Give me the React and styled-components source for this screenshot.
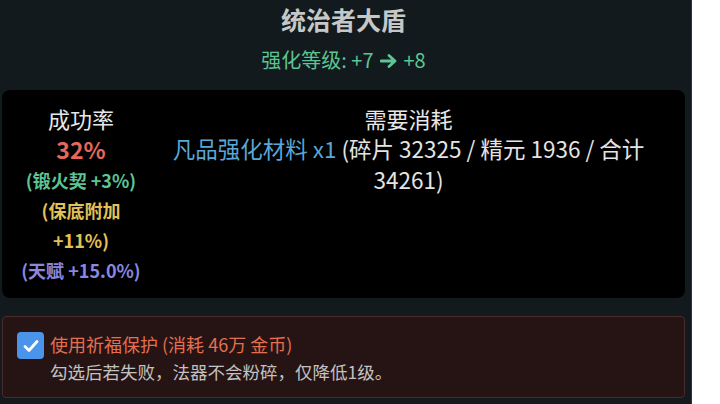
import React from 'react';
import styled, { createGlobalStyle } from 'styled-components';

const Global = createGlobalStyle`
    html, body {
        margin: 0;
        padding: 0;
        background: #fff;
    }
    body {
        font-family: "Noto Sans CJK SC", "Noto Sans", sans-serif;
    }
`;

function Arrow() {
    return (
        <svg width="18" height="16" viewBox="0 0 18 16" style={{ margin: '0 6px', verticalAlign: '-1px' }}>
            <path d="M1 8 H14 M9 2.5 L15 8 L9 13.5" fill="none" stroke="currentColor" strokeWidth="2.8" strokeLinecap="round" strokeLinejoin="round" />
        </svg>
    );
}

function App() {
    return (
        <>
            <Global />
            <Panel>
                <Title>统治者大盾</Title>
                <Level>强化等级: +7<Arrow />+8</Level>

                <CostBox>
                    <RateCol>
                        <Head>成功率</Head>
                        <Rate>32%</Rate>
                        <Bonus color="#5cc593">(锻火契 +3%)</Bonus>
                        <Bonus color="#e3c159">(保底附加 +11%)</Bonus>
                        <Bonus color="#8a87e0">(天赋 +15.0%)</Bonus>
                    </RateCol>
                    <NeedCol>
                        <Head>需要消耗</Head>
                        <Need>
                            <Material>凡品强化材料 x1</Material> (碎片 32325 / 精元 1936 / 合计 34261)
                        </Need>
                    </NeedCol>
                </CostBox>

                <Protect>
                    <Check>
                        <svg width="16" height="14" viewBox="0 0 16 14">
                            <path d="M2 7.5 L6 11.5 L14 2.5" fill="none" stroke="#fff" strokeWidth="2.8" strokeLinecap="round" strokeLinejoin="round" />
                        </svg>
                    </Check>
                    <ProtectText>
                        <ProtectLabel>使用祈福保护 (消耗 46万 金币)</ProtectLabel>
                        <ProtectNote>勾选后若失败，法器不会粉碎，仅降低1级。</ProtectNote>
                    </ProtectText>
                </Protect>
            </Panel>
        </>
    );
}

const Panel = styled.div`
    width: 692px;
    height: 404px;
    box-sizing: border-box;
    background: #121a1d;
    border-right: 1px solid #2c363a;
    padding: 1px 6px 0 2px;
    display: flex;
    flex-direction: column;
    overflow: hidden;
`;
const Title = styled.div`
    text-align: center;
    font-size: 25px;
    font-weight: bold;
    color: #c6c8c8;
    line-height: 36px;
`;
const Level = styled.div`
    text-align: center;
    font-size: 20px;
    color: #5cc593;
    line-height: 26px;
    margin-top: 10px;
`;
const CostBox = styled.div`
    margin-top: 17px;
    height: 208px;
    box-sizing: border-box;
    background: #000;
    border-radius: 8px;
    display: flex;
    padding: 13px 10px 0 14px;
`;
const RateCol = styled.div`
    width: 130px;
    text-align: center;
`;
const NeedCol = styled.div`
    flex: 1;
    text-align: center;
    padding: 0 18px 0 14px;
`;
const Head = styled.div`
    font-size: 22px;
    color: #e8e8e8;
    line-height: 30px;
`;
const Rate = styled.div`
    font-size: 23px;
    font-weight: bold;
    color: #e3695a;
    line-height: 32px;
`;
const Bonus = styled.div`
    font-size: 18px;
    font-weight: bold;
    color: ${p => p.color};
    line-height: 30px;
`;
const Need = styled.div`
    font-size: 22.5px;
    color: #e4e4e4;
    line-height: 31px;
`;
const Material = styled.span`
    color: #5aa6d6;
`;
const Protect = styled.div`
    margin-top: 18px;
    height: 82px;
    box-sizing: border-box;
    background: #261414;
    border: 1px solid #4a2b2a;
    border-radius: 4px;
    display: flex;
    align-items: flex-start;
    gap: 6px;
    padding: 13px 14px;
`;
const Check = styled.div`
    width: 27px;
    height: 27px;
    margin-top: 2px;
    flex: none;
    border-radius: 4px;
    background: #4a94ea;
    display: flex;
    align-items: center;
    justify-content: center;
`;
const ProtectText = styled.div`
    display: flex;
    flex-direction: column;
`;
const ProtectLabel = styled.div`
    font-size: 18px;
    color: #e36f4f;
    line-height: 28px;
`;
const ProtectNote = styled.div`
    font-size: 17.5px;
    color: #c2c2c2;
    line-height: 27px;
`;

export default App;
